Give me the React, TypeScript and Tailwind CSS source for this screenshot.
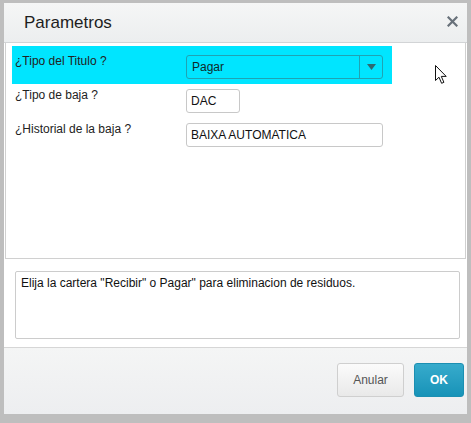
import React from "react";

const font = { fontFamily: '"Liberation Sans", Arial, sans-serif' };

const Field = ({ label, children }: { label: string; children: React.ReactNode }) => (
  <div className="flex items-start">
    <div className="w-[171px] text-[12px] leading-[14px] -mt-px text-[#222]">{label}</div>
    {children}
  </div>
);

const App = () => {
  return (
    <div className="w-[471px] h-[423px] bg-[#bebebe] pt-[3px] pl-[4px] relative" style={font}>
      <div className="w-[463px] h-[411px] bg-white flex flex-col">
        {/* Header */}
        <div className="h-[40px] shrink-0 flex items-center justify-between pl-[20px] pr-[9px] bg-gradient-to-b from-[#f5f6f6] to-[#eceeef] border-b border-[#d2d4d6]">
          <span className="text-[17px] text-[#1e1e1e] leading-none">Parametros</span>
          <svg width="11" height="11" viewBox="0 0 11 11" className="-mt-[3px]">
            <path d="M1.5 1.5 L9.5 9.5 M9.5 1.5 L1.5 9.5" stroke="#68717a" strokeWidth="2.2" strokeLinecap="square" />
          </svg>
        </div>

        {/* Parameters panel */}
        <div className="h-[216px] shrink-0 mx-px border border-t-0 border-[#d0d0d0] pt-[3px] pl-[6px] relative">
          <div className="w-[380px] h-[38px] bg-[#00e5ff] pl-[3px] pt-[9px]">
            <Field label="¿Tipo del Titulo ?">
              <div className="w-[197px] h-[24px] flex items-stretch rounded-[3px] border border-[#1fa3b3]">
                <div className="flex-1 flex items-center pl-[5px] text-[12px] text-[#0f2a2a]">Pagar</div>
                <div className="w-[23px] border-l border-[#1fa3b3] flex items-center justify-center">
                  <svg width="9" height="6" viewBox="0 0 9 6">
                    <path d="M0 0 H9 L4.5 6 Z" fill="#2f6a72" />
                  </svg>
                </div>
              </div>
            </Field>
          </div>
          <div className="pl-[3px] pt-[5px]">
            <Field label="¿Tipo de baja ?">
              <div className="w-[54px] h-[24px] rounded-[3px] border border-[#c8c8c8] flex items-center pl-[4px] text-[12px] text-[#111]">
                DAC
              </div>
            </Field>
          </div>
          <div className="pl-[3px] pt-[10px]">
            <Field label="¿Historial de la baja ?">
              <div className="w-[197px] h-[24px] rounded-[3px] border border-[#c8c8c8] flex items-center pl-[4px] text-[12px] text-[#111]">
                BAIXA AUTOMATICA
              </div>
            </Field>
          </div>

          {/* mouse pointer */}
          <svg width="13" height="20" viewBox="0 0 13 20" className="absolute left-[429px] top-[22px]">
            <path
              d="M0.5 0.5 L0.5 15.5 L4 12.2 L6.6 18.3 L8.9 17.3 L6.3 11.4 L11.2 11.4 Z"
              fill="#fff"
              stroke="#111"
              strokeWidth="1"
              strokeLinejoin="round"
            />
          </svg>
        </div>

        {/* Help text */}
        <div className="mt-[12px] ml-[11px] w-[445px] h-[68px] shrink-0 border border-[#cccccc] rounded-[2px] px-[5px] pt-[4px] text-[12px] leading-[14px] text-[#111]">
          Elija la cartera "Recibir" o Pagar" para eliminacion de residuos.
        </div>

        {/* Footer */}
        <div className="mt-auto h-[67px] shrink-0 border-t border-[#d6d6d6] bg-gradient-to-b from-[#f4f5f5] to-[#edeef0] flex items-start justify-end gap-[10px] pt-[15px] pr-[3px]">
          <button className="w-[67px] h-[34px] rounded-[3px] border border-[#cfcfcf] bg-gradient-to-b from-[#fbfbfb] to-[#e9e9e9] text-[12px] text-[#555]">
            Anular
          </button>
          <button className="w-[50px] h-[34px] rounded-[3px] border border-[#1b8fb2] bg-gradient-to-b from-[#36abcc] to-[#1693b8] text-[12px] font-bold text-white">
            OK
          </button>
        </div>
      </div>
    </div>
  );
};

export default App;
